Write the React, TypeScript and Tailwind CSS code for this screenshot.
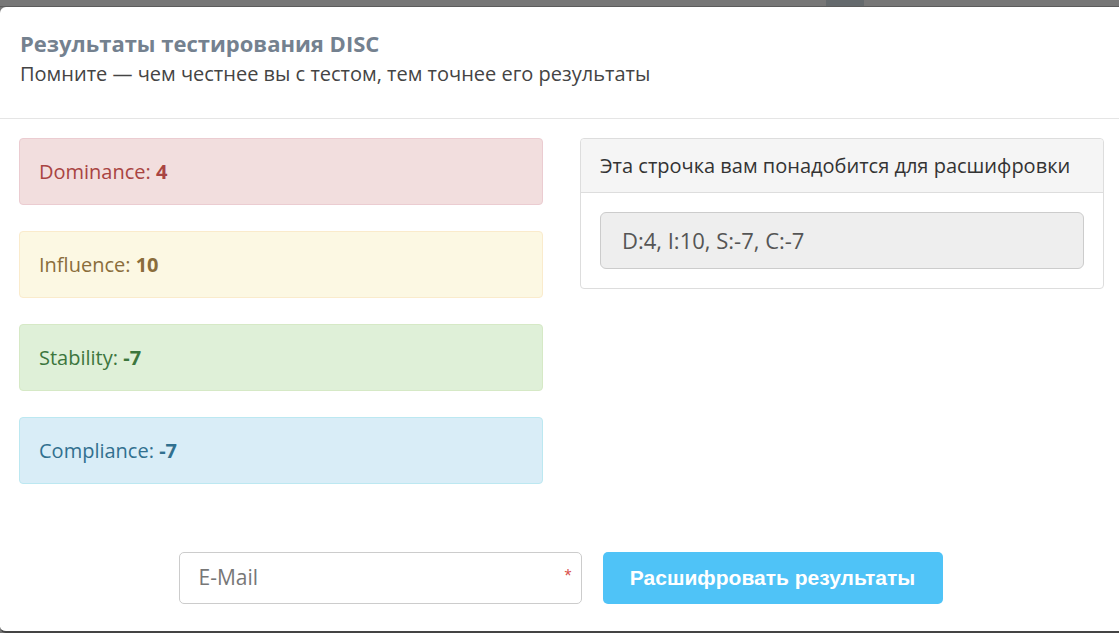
import React from "react";

const alerts = [
  { label: "Dominance:", value: "4", cls: "bg-[#f2dede] border-[#ebccd1] text-[#a94442]" },
  { label: "Influence:", value: "10", cls: "bg-[#fcf8e3] border-[#faebcc] text-[#8a6d3b]" },
  { label: "Stability:", value: "-7", cls: "bg-[#dff0d8] border-[#d6e9c6] text-[#3c763d]" },
  { label: "Compliance:", value: "-7", cls: "bg-[#d9edf7] border-[#bce8f1] text-[#31708f]" },
];

export default function App() {
  return (
    <div className="h-[633px] w-[1119px] overflow-hidden bg-[#777777] flex flex-col font-['Open_Sans',sans-serif]">
      <div className="h-[7px] flex shrink-0 border-b border-[#5c5c5c]">
        <div className="w-[826px]" />
        <div className="w-[38px] bg-[#656a6d]" />
      </div>
      <div className="flex-1 flex flex-col bg-white rounded-tl-[6px] rounded-bl-[6px] border-b-2 border-[#444]">
        <div className="px-5 pt-[21px] pb-[30px] border-b border-[#e5e5e5]">
          <h1 className="text-[22px] font-bold leading-[30px] text-[#74818f]">Результаты тестирования DISC</h1>
          <p className="mt-[2px] text-[20px] leading-[28px] text-[#444]">Помните — чем честнее вы с тестом, тем точнее его результаты</p>
        </div>
        <div className="flex pl-[19px] pt-[19px] gap-[37px]">
          <div className="w-[524px] shrink-0 flex flex-col gap-[26px]">
            {alerts.map((a) => (
              <div key={a.label} className={`h-[67px] border rounded-[4px] px-[19px] flex items-center text-[20px] ${a.cls}`}>
                <span>{a.label}&nbsp;</span>
                <b>{a.value}</b>
              </div>
            ))}
          </div>
          <div className="w-[524px] shrink-0 self-start border border-[#ddd] rounded-[4px]">
            <div className="h-[54px] bg-[#f5f5f5] border-b border-[#ddd] px-[19px] flex items-center text-[20px] text-[#333] rounded-t-[4px]">
              Эта строчка вам понадобится для расшифровки
            </div>
            <div className="p-[19px]">
              <div className="h-[57px] bg-[#eeeeee] border border-[#ccc] rounded-[6px] px-[21px] flex items-center text-[22px] text-[#555]">
                D:4, I:10, S:-7, C:-7
              </div>
            </div>
          </div>
        </div>
        <div className="flex-1" />
        <div className="flex justify-center gap-[21px] pb-[27px] pl-[2px]">
          <div className="relative w-[403px] h-[52px] border border-[#ccc] rounded-[5px] flex items-center px-[19px]">
            <span className="text-[21px] text-[#777]">E-Mail</span>
            <span className="absolute right-[9px] top-[10px] text-[#d9534f] text-[18px] font-['Liberation_Sans',sans-serif]">*</span>
          </div>
          <button className="w-[340px] h-[52px] bg-[#4fc3f7] rounded-[5px] text-white font-bold text-[21px] font-['Liberation_Sans',Arial,sans-serif]">
            Расшифровать результаты
          </button>
        </div>
      </div>
    </div>
  );
}
